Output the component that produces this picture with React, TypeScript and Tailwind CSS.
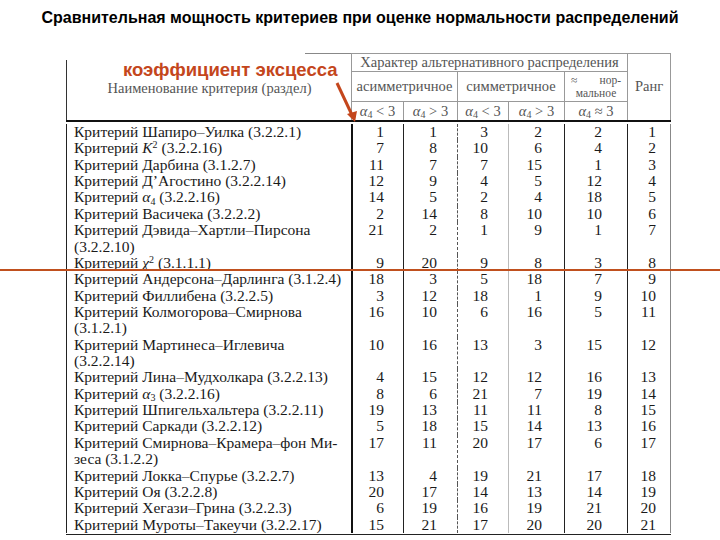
import React from "react"

type Row = { name: React.ReactNode[]; v: number[] }

const A = ({ n }: { n: string }) => (
  <span>
    <i>α</i>
    <sub className="text-[10px]">{n}</sub>
  </span>
)

const rows: Row[] = [
  { name: ["Критерий Шапиро–Уилка (3.2.2.1)"], v: [1, 1, 3, 2, 2, 1] },
  {
    name: [
      <span key="k">
        Критерий <i>K</i>
        <sup className="text-[10px]">2</sup> (3.2.2.16)
      </span>,
    ],
    v: [7, 8, 10, 6, 4, 2],
  },
  { name: ["Критерий Дарбина (3.1.2.7)"], v: [11, 7, 7, 15, 1, 3] },
  { name: ["Критерий Д’Агостино (3.2.2.14)"], v: [12, 9, 4, 5, 12, 4] },
  {
    name: [
      <span key="a">
        Критерий <A n="4" /> (3.2.2.16)
      </span>,
    ],
    v: [14, 5, 2, 4, 18, 5],
  },
  { name: ["Критерий Васичека (3.2.2.2)"], v: [2, 14, 8, 10, 10, 6] },
  { name: ["Критерий Дэвида–Хартли–Пирсона", "(3.2.2.10)"], v: [21, 2, 1, 9, 1, 7] },
  {
    name: [
      <span key="x">
        Критерий <i>χ</i>
        <sup className="text-[10px]">2</sup> (3.1.1.1)
      </span>,
    ],
    v: [9, 20, 9, 8, 3, 8],
  },
  { name: ["Критерий Андерсона–Дарлинга (3.1.2.4)"], v: [18, 3, 5, 18, 7, 9] },
  { name: ["Критерий Филлибена (3.2.2.5)"], v: [3, 12, 18, 1, 9, 10] },
  { name: ["Критерий Колмогорова–Смирнова", "(3.1.2.1)"], v: [16, 10, 6, 16, 5, 11] },
  { name: ["Критерий Мартинеса–Иглевича", "(3.2.2.14)"], v: [10, 16, 13, 3, 15, 12] },
  { name: ["Критерий Лина–Мудхолкара (3.2.2.13)"], v: [4, 15, 12, 12, 16, 13] },
  {
    name: [
      <span key="a3">
        Критерий <A n="3" /> (3.2.2.16)
      </span>,
    ],
    v: [8, 6, 21, 7, 19, 14],
  },
  { name: ["Критерий Шпигельхальтера (3.2.2.11)"], v: [19, 13, 11, 11, 8, 15] },
  { name: ["Критерий Саркади (3.2.2.12)"], v: [5, 18, 15, 14, 13, 16] },
  { name: ["Критерий Смирнова–Крамера–фон Ми-", "зеса (3.1.2.2)"], v: [17, 11, 20, 17, 6, 17] },
  { name: ["Критерий Локка–Спурье (3.2.2.7)"], v: [13, 4, 19, 21, 17, 18] },
  { name: ["Критерий Оя (3.2.2.8)"], v: [20, 17, 14, 13, 14, 19] },
  { name: ["Критерий Хегази–Грина (3.2.2.3)"], v: [6, 19, 16, 19, 21, 20] },
  { name: ["Критерий Муроты–Такеучи (3.2.2.17)"], v: [15, 21, 17, 20, 20, 21] },
]

const cols = "grid grid-cols-[285px_52px_54px_51px_56px_63px_44px]"

// per-column cell styles (left border + right padding)
const numCell = [
  "border-l-2 border-[#111] pr-[19px]",
  "border-l border-[#222] pr-[20px]",
  "border-l border-dashed border-[#555] pr-[20px]",
  "border-l border-[#bbb] pr-[22px]",
  "border-l border-[#222] pr-[25px]",
  "border-l border-[#222] border-r border-r-[#888] pr-[14px]",
]

export default function App() {
  return (
    <div className="relative w-[720px] h-[540px] overflow-hidden bg-white">
      <div className="h-[36px] flex items-center justify-center font-['Liberation_Sans',Arial,sans-serif] font-bold text-[16px] text-black">
        Сравнительная мощность критериев при оценке нормальности распределений
      </div>

      <div className="ml-[66px] mt-[17px] w-[605px] font-['Liberation_Serif','Times_New_Roman',serif]">
        {/* header */}
        <div className={`${cols} grid-rows-[19px_30px_18px] border-b-2 border-[#111] text-[#555] text-[14.5px]`}>
          <div className="relative row-span-3 flex items-center justify-center">
            <div className="absolute left-0 top-[7px] bottom-0 w-px bg-[#333]" />
            <div className="absolute left-[239px] right-0 top-0 h-px bg-[#888]" />
            <span className="pt-[4px] pl-[2px]">Наименование критерия (раздел)</span>
          </div>
          <div className="col-span-5 border-l border-t border-b border-[#999] flex items-center justify-center leading-none">
            Характер альтернативного распределения
          </div>
          <div className="row-span-3 col-start-7 row-start-1 border-l border-t border-r border-[#999] flex items-center justify-center">
            Ранг
          </div>
          <div className="col-span-2 border-l border-b border-[#999] flex items-center justify-center">асимметричное</div>
          <div className="col-span-2 border-l border-b border-[#999] flex items-center justify-center">симметричное</div>
          <div className="border-l border-b border-[#999] flex flex-col justify-center px-[6px] text-[11.5px] leading-[13px]">
            <div className="flex justify-between">
              <span>≈</span>
              <span>нор-</span>
            </div>
            <div className="text-center">мальное</div>
          </div>
          <div className="border-l border-[#999] flex items-center justify-center leading-none">
            <A n="4" />&nbsp;&lt; 3
          </div>
          <div className="border-l border-[#999] flex items-center justify-center leading-none">
            <A n="4" />&nbsp;&gt; 3
          </div>
          <div className="border-l border-[#999] flex items-center justify-center leading-none">
            <A n="4" />&nbsp;&lt; 3
          </div>
          <div className="border-l border-[#999] flex items-center justify-center leading-none">
            <A n="4" />&nbsp;&gt; 3
          </div>
          <div className="border-l border-[#999] flex items-center justify-center leading-none">
            <A n="4" />&nbsp;≈ 3
          </div>
        </div>

        {/* body */}
        <div className="border-b border-[#222] pt-[2px] pb-[1px] text-[15.5px] leading-[16.36px] text-[#1a1a1a]">
          {rows.map((r, i) => (
            <div key={i} className={cols}>
              <div className="border-l border-[#222] pl-[7px] whitespace-nowrap">
                {r.name.map((line, j) => (
                  <div key={j}>{line}</div>
                ))}
              </div>
              {r.v.map((n, k) => (
                <div key={k} className={`${numCell[k]} text-right`}>
                  {n}
                </div>
              ))}
            </div>
          ))}
        </div>
      </div>

      {/* annotation */}
      <div className="absolute left-[123px] top-[58px] font-['Liberation_Sans',Arial,sans-serif] font-bold text-[18.5px] leading-[24px] text-[#c4461c]">
        коэффициент эксцесса
      </div>
      <svg className="absolute left-[330px] top-[78px]" width="32" height="48" viewBox="0 0 32 48">
        <line x1="7" y1="5" x2="22" y2="37" stroke="#c4461c" strokeWidth="3" />
        <polygon points="17,36 27,33 25,44" fill="#c4461c" />
      </svg>

      {/* orange divider */}
      <div className="absolute left-0 right-0 top-[269px] h-[2px] bg-[#c0501e]" />
    </div>
  )
}
